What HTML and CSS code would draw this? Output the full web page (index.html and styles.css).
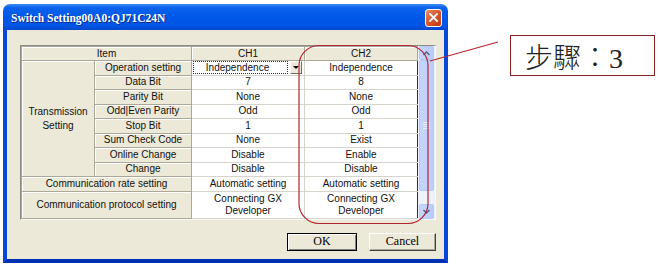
FILE: index.html
```html
<!DOCTYPE html>
<html lang="en">
<head>
    <meta charset="UTF-8">
    <title>Switch Setting</title>
    <link rel="stylesheet" href="styles.css">
</head>
<body>
    <div class="page">
        <div class="window">
            <div class="titlebar">
                <span class="title">Switch Setting00A0:QJ71C24N</span>
                <span class="close-btn">
                    <svg width="9" height="9" viewBox="0 0 9 9"><path d="M1 1L8 8M8 1L1 8" stroke="#fff" stroke-width="1.8" stroke-linecap="square"/></svg>
                </span>
            </div>
            <div class="client">
                <div class="grid-frame">
                    <table class="grid">
                        <colgroup>
                            <col class="c-group">
                            <col class="c-item">
                            <col class="c-ch">
                            <col class="c-ch">
                        </colgroup>
                        <tr class="head">
                            <th colspan="2">Item</th>
                            <th>CH1</th>
                            <th>CH2</th>
                        </tr>
                        <tr>
                            <th rowspan="8" class="group">Transmission<br>Setting</th>
                            <th>Operation setting</th>
                            <td>
                                <div class="combo">
                                    <span class="combo-text">Independence</span>
                                    <span class="combo-btn"><span class="arrow"></span></span>
                                </div>
                            </td>
                            <td>Independence</td>
                        </tr>
                        <tr><th>Data Bit</th><td>7</td><td>8</td></tr>
                        <tr><th>Parity Bit</th><td>None</td><td>None</td></tr>
                        <tr><th>Odd|Even Parity</th><td>Odd</td><td>Odd</td></tr>
                        <tr><th>Stop Bit</th><td>1</td><td>1</td></tr>
                        <tr><th>Sum Check Code</th><td>None</td><td>Exist</td></tr>
                        <tr><th>Online Change</th><td>Disable</td><td>Enable</td></tr>
                        <tr><th>Change</th><td>Disable</td><td>Disable</td></tr>
                        <tr><th colspan="2">Communication rate setting</th><td>Automatic setting</td><td>Automatic setting</td></tr>
                        <tr class="tall"><th colspan="2">Communication protocol setting</th><td>Connecting GX<br>Developer</td><td>Connecting GX<br>Developer</td></tr>
                    </table>
                    <div class="scrollbar">
                        <div class="sb-btn">
                            <svg width="7" height="5" viewBox="0 0 7 5"><path d="M0.5 4L3.5 1L6.5 4" fill="none" stroke="#4d6185" stroke-width="1.4"/></svg>
                        </div>
                        <div class="sb-thumb"><span class="grip"></span></div>
                        <div class="sb-track"></div>
                        <div class="sb-btn">
                            <svg width="7" height="5" viewBox="0 0 7 5"><path d="M0.5 1L3.5 4L6.5 1" fill="none" stroke="#4d6185" stroke-width="1.4"/></svg>
                        </div>
                    </div>
                </div>
                <div class="buttons">
                    <button class="btn default">OK</button>
                    <button class="btn">Cancel</button>
                </div>
            </div>
        </div>

        <div class="note">步驟：3</div>

        <svg class="markup" width="658" height="268" viewBox="0 0 658 268">
            <rect x="299" y="45.5" width="129" height="178" rx="20" ry="20" fill="none" stroke="#b3262e" stroke-width="1.2"/>
            <line x1="430" y1="61" x2="498" y2="42" stroke="#b3262e" stroke-width="1.2"/>
        </svg>
    </div>
</body>
</html>
```

FILE: styles.css
```css
body {
    margin: 0;
    background: #fff;
    font-family: "Liberation Sans", Arial, sans-serif;
}
.page {
    position: relative;
    width: 658px;
    height: 268px;
    box-sizing: border-box;
    padding: 4px 0 0 3px;
    display: flex;
    align-items: flex-start;
    overflow: hidden;
}
.window {
    width: 445px;
    height: 259px;
    display: flex;
    flex-direction: column;
}
.titlebar {
    height: 26px;
    flex: none;
    display: flex;
    align-items: center;
    justify-content: space-between;
    padding: 0 6px 0 8px;
    border-radius: 7px 7px 0 0;
    background: linear-gradient(#3c8cf8 0%, #0a62ec 14%, #0058e8 50%, #0254e2 85%, #0046c8 100%);
}
.title {
    font-family: "Liberation Serif", serif;
    font-weight: bold;
    font-size: 11.5px;
    color: #fff;
    text-shadow: 1px 1px 0 #0a2a8a;
    margin-top: 1px;
}
.close-btn {
    width: 15px;
    height: 16px;
    margin-top: 1px;
    border: 1px solid #fff;
    border-radius: 3px;
    background: linear-gradient(135deg, #ec8a68 0%, #db5a30 45%, #c4380e 100%);
    display: flex;
    align-items: center;
    justify-content: center;
}
.client {
    flex: 1;
    background: #ece9d8;
    border-left: 4px solid #0847d8;
    border-right: 4px solid #0847d8;
    border-bottom: 4px solid #0031b4;
    padding: 15px 8px 0 13px;
}
.grid-frame {
    display: flex;
    border: 1px solid #8e8c82;
    border-right-color: #f8f8f4;
    border-bottom-color: #f8f8f4;
    background: #fff;
}
.grid {
    width: 397px;
    table-layout: fixed;
    border-collapse: collapse;
    font-size: 10px;
    color: #111;
}
.c-group { width: 73px; }
.c-item { width: 97px; }
.c-ch { width: 113px; }
.grid tr { height: 14.5px; }
.grid tr.head { height: 14px; }
.grid tr.tall { height: 27px; }
.grid th, .grid td {
    padding: 0;
    text-align: center;
    font-weight: normal;
    line-height: 12px;
    white-space: nowrap;
}
.grid th {
    background: #ece9d8;
    border: 1px solid #aca899;
    box-shadow: inset 1px 1px 0 #fff;
}
.grid td {
    border: 1px solid #d6d4cc;
}
.grid tr td:last-child {
    border-right: 1px solid #333;
}
.grid th.group {
    line-height: 14px;
}
.combo {
    display: flex;
    align-items: stretch;
    height: 13px;
    padding: 0 2px 0 1px;
}
.combo-text {
    flex: 1;
    border: 1px dotted #333;
    line-height: 11px;
    padding-right: 6px;
}
.combo-btn {
    width: 10px;
    margin-left: 2px;
    background: #ece9d8;
    border: 1px solid #fff;
    border-right-color: #716f64;
    border-bottom-color: #716f64;
    display: flex;
    align-items: center;
    justify-content: center;
}
.arrow {
    width: 0;
    height: 0;
    border-left: 3px solid transparent;
    border-right: 3px solid transparent;
    border-top: 3px solid #000;
}
.scrollbar {
    width: 17px;
    display: flex;
    flex-direction: column;
    background: #eef0fa;
}
.sb-btn {
    height: 14px;
    flex: none;
    margin: 0 1px;
    border: 1px solid #b7c8f3;
    border-radius: 2px;
    background: linear-gradient(90deg, #c7d6fb, #b8cbf8);
    display: flex;
    align-items: center;
    justify-content: center;
    box-sizing: border-box;
}
.sb-btn:last-child { height: 15px; }
.sb-thumb {
    height: 131px;
    flex: none;
    margin: 0 1px;
    border: 1px solid #b7c8f3;
    border-radius: 2px;
    background: linear-gradient(90deg, #c6d5fb, #bccdf9);
    box-sizing: border-box;
    display: flex;
    align-items: center;
    justify-content: center;
}
.grip {
    width: 7px;
    height: 7px;
    background: repeating-linear-gradient(#e6edfd 0 1px, transparent 1px 2px);
}
.sb-track {
    flex: 1;
}
.buttons {
    display: flex;
    justify-content: flex-end;
    gap: 12px;
    margin-top: 13px;
}
.btn {
    height: 18px;
    padding: 0;
    font-family: "Liberation Serif", serif;
    font-size: 12px;
    color: #000;
    background: #ece9d8;
    border: 1px solid #fff;
    border-right-color: #404040;
    border-bottom-color: #404040;
    box-shadow: inset -1px -1px 0 #aca899;
    width: 67px;
}
.btn.default {
    width: 70px;
    outline: 1px solid #000;
    outline-offset: -1px;
    border-color: #000;
    box-shadow: inset 1px 1px 0 #fff, inset -1px -1px 0 #808080;
}
.note {
    margin: 31px 0 0 62px;
    width: 145px;
    height: 41px;
    box-sizing: border-box;
    border: 1.5px solid #8c1f22;
    background: #fff;
    padding-left: 14px;
    display: flex;
    align-items: center;
    font-family: "Liberation Serif", "Noto Sans CJK TC", serif;
    font-weight: 300;
    font-size: 28px;
    color: #222;
}
.markup {
    position: absolute;
    left: 0;
    top: 0;
    pointer-events: none;
}
```
